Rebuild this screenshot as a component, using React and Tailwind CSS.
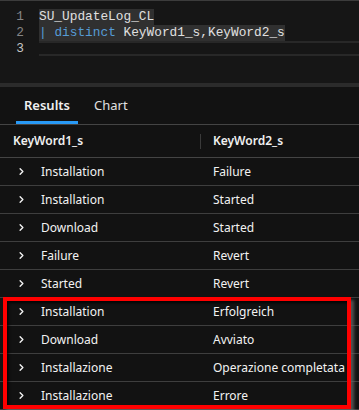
import { ChevronRight } from "lucide-react";

const ROWS = [
  ["Installation", "Failure"],
  ["Installation", "Started"],
  ["Download", "Started"],
  ["Failure", "Revert"],
  ["Started", "Revert"],
  ["Installation", "Erfolgreich"],
  ["Download", "Avviato"],
  ["Installazione", "Operazione completata"],
  ["Installazione", "Errore"],
];

const mono = { fontFamily: '"Liberation Mono", "DejaVu Sans Mono", monospace' };

function Editor() {
  return (
    <div className="h-[82px] bg-[#161616] pt-[8px] text-[12.8px] leading-[16px]" style={mono}>
      <div className="flex h-[16px]">
        <div className="w-[24px] text-right text-[#858585]">1</div>
        <div className="ml-[15px] bg-[#303030] text-[#e0e0e0] whitespace-pre">SU_UpdateLog_CL</div>
      </div>
      <div className="flex h-[16px]">
        <div className="w-[24px] text-right text-[#858585]">2</div>
        <div className="ml-[15px] bg-[#303030] text-[#e0e0e0] whitespace-pre">
          <span className="text-[#569cd6]">|</span> <span className="text-[#569cd6]">distinct</span> KeyWord1_s,KeyWord2_s
        </div>
      </div>
      <div className="flex h-[15px]">
        <div className="w-[24px] text-right text-[#c6c6c6]">3</div>
        <div className="ml-[15px] flex-1 border-y-2 border-[#282828]"></div>
      </div>
    </div>
  );
}

function Tabs() {
  return (
    <div className="flex h-[38px] items-end border-b border-[#444] px-[16px] text-[13px]">
      <div className="flex flex-col items-center">
        <span className="px-[8px] pb-[6px] font-semibold text-[#f0f0f0]">Results</span>
        <div className="h-[3px] w-full bg-[#2899f5]"></div>
      </div>
      <span className="ml-[16px] pb-[9px] text-[#e0e0e0]">Chart</span>
    </div>
  );
}

export default function App() {
  return (
    <div
      className="relative h-[410px] w-[359px] overflow-hidden bg-[#121212] text-[12px]"
      style={{ fontFamily: '"Noto Sans", "Open Sans", sans-serif' }}
    >
      <div className="h-px bg-[#3c3c3c]"></div>
      <Editor />
      <div className="h-[4px] bg-[#2b2b2b]"></div>
      <Tabs />
      <div className="flex h-[33px] items-center border-b border-[#444] font-semibold text-[#f0f0f0]">
        <div className="w-[200px] pl-[13px]">KeyWord1_s</div>
        <div className="h-[15px] w-px bg-[#3a3a3a]"></div>
        <div className="pl-[12px]">KeyWord2_s</div>
      </div>
      {ROWS.map(([a, b], i) => (
        <div key={i} className="flex h-[28px] items-center border-b border-[#3e3e3e] text-[#f2f2f2]">
          <div className="flex w-[201px] items-center">
            <ChevronRight className="ml-[16px] h-[11px] w-[11px] text-[#f2f2f2]" strokeWidth={3} />
            <span className="ml-[14px]">{a}</span>
          </div>
          <span className="pl-[12px]">{b}</span>
        </div>
      ))}
      <div className="absolute left-[3px] top-[297px] h-[112px] w-[348px] border-4 border-[#ff0000] shadow-[3px_3px_3px_rgba(110,110,110,0.7),inset_2px_2px_3px_rgba(0,0,0,0.8)]"></div>
    </div>
  );
}
